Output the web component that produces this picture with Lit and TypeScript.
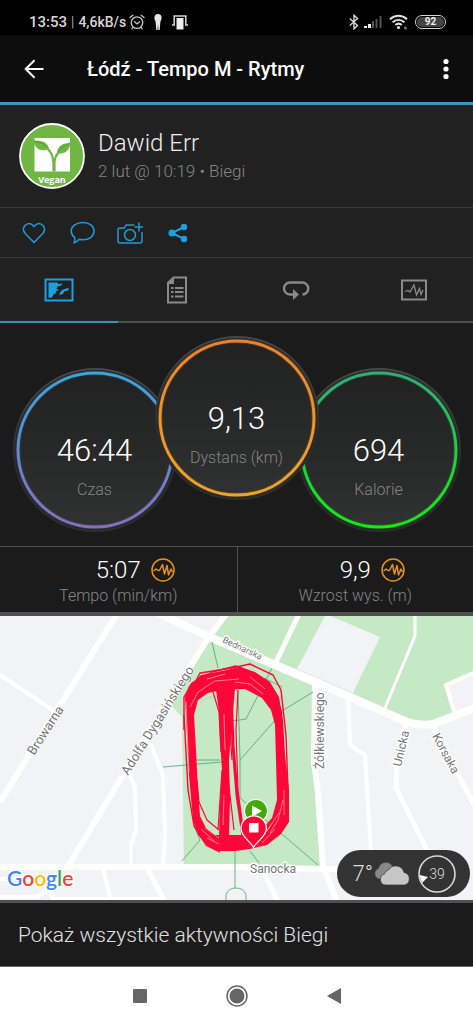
import { LitElement, html, svg, css } from "lit";
import { customElement, property, state } from "lit/decorators.js";

@customElement("status-bar")
class StatusBar extends LitElement {
  static styles = css`
    :host { display: flex; justify-content: space-between; align-items: center; height: 35px; padding: 8px 27px 0 29px; box-sizing: border-box; background: #000; color: #d6d6d6; font-size: 15px; font-weight: 500; line-height: 20px; }
    .side { display: flex; align-items: center; }
    .speed { font-size: 14px; }
    .bar { font-weight: 300; margin: 0 4px; }
    .alarm { margin: 0 9px 0 3px; }
    .person { margin-right: 10px; }
    .signal { margin: 0 7px 0 5px; }
    .wifi { margin-right: 6px; }
    .battery { box-sizing: border-box; width: 31px; height: 14px; border: 1px solid #d6d6d6; border-radius: 7px; background: #444 content-box; padding: 1px; font-size: 10px; font-weight: 700; line-height: 10px; text-align: center; color: #eee; }
    svg { display: block; }
  `;
  render() {
    return html`
      <div class="side">
        <span>13:53</span><span class="bar">|</span><span class="speed">4,6kB/s</span>
        <svg class="alarm" width="16" height="16" viewBox="0 0 16 16" fill="none" stroke="#c8c8c8" stroke-width="1.3" stroke-linecap="round">
          <circle cx="8" cy="8.6" r="5.8" /><path d="M1 3.6 3.8 1.2M15 3.6l-2.8-2.4M5.6 7.8 8 10l2.6-2.2M4 13.4l-1.2 1.4M12 13.4l1.2 1.4" />
        </svg>
        <svg class="person" width="8" height="16" viewBox="0 0 8 16" fill="#e6e6e6">
          <ellipse cx="4" cy="3.8" rx="3.6" ry="3.8" /><path d="M1.3 6h5.4l-.5 4-.5 6H4.4L4 10l-.4 6H2.3l-.5-6z" />
        </svg>
        <svg width="16" height="16" viewBox="0 0 16 16">
          <path d="M2.2 11V2h11.6v9M0 11h3M13 11h3" fill="none" stroke="#d6d6d6" stroke-width="1.500" /><path d="M4.500 4h7v11.500h-7z" fill="#eee" />
        </svg>
      </div>
      <div class="side">
        <svg width="10" height="16" viewBox="0 0 10 16" fill="none" stroke="#d6d6d6" stroke-width="1.400"><path d="m.8 4.400 7.700 7L5 14.800V1.200l3.500 3.400-7.700 7" /></svg>
        <svg class="signal" width="18" height="14" viewBox="0 0 18 14">
          <path d="M0 11h3v2H0zM4 9h3v4H4z" fill="#eee" /><path d="M8 6h2v7H8zM11.500 4h2v9h-2zM15.500 1h2v12h-2z" fill="#555" />
        </svg>
        <svg class="wifi" width="20" height="16" viewBox="0 0 20 16" fill="none" stroke="#e2e2e2" stroke-width="2">
          <path d="M1 5.200c5-4.600 12-4.600 17 0M3.600 8.200c3.500-3.100 8.300-3.100 11.800 0M6.300 11c2-1.700 4.500-1.700 6.500 0" /><circle cx="9.500" cy="13.500" r="1.600" fill="#e2e2e2" stroke="none" /><circle cx="16.500" cy="14" r="1.500" fill="#777" stroke="none" />
        </svg>
        <span class="battery">92</span>
      </div>`;
  }
}

@customElement("activity-gauge")
class ActivityGauge extends LitElement {
  @property() value = "";
  @property() label = "";
  @property() from = "";
  @property() to = "";
  static styles = css`
    :host { display: grid; width: 164px; flex: none; }
    svg, .text { grid-area: 1 / 1; }
    svg { display: block; }
    .text { display: flex; flex-direction: column; align-items: center; padding-top: 64px; }
    .value { font-size: 31px; line-height: 38px; font-weight: 300; color: #fff; }
    .label { font-size: 16px; line-height: 20px; margin-top: 10px; font-weight: 300; color: #858585; }
  `;
  render() {
    return html`
      <svg width="164" height="164" viewBox="0 0 164 164">
        <defs>
          <linearGradient id="ring" x2="0" y2="1"><stop stop-color=${this.from} /><stop offset="1" stop-color=${this.to} /></linearGradient>
          <linearGradient id="fill" x2="0" y2="1"><stop stop-color="#222222" /><stop offset=".5" stop-color="#272828" /><stop offset="1" stop-color="#303131" /></linearGradient>
          <linearGradient id="edge" x2="0" y2="1"><stop stop-color="#454748" /><stop offset=".6" stop-color="#2b2b2b" /><stop offset="1" stop-color="#2f2e2e" /></linearGradient>
        </defs>
        <circle cx="82" cy="82" r="81" fill="#202020" stroke="url(#edge)" stroke-width="2" />
        <circle cx="82" cy="82" r="77" fill="url(#fill)" stroke=${this.to} stroke-opacity=".15" stroke-width="5" />
        <circle cx="82" cy="82" r="77" fill="none" stroke="url(#ring)" stroke-width="3" />
      </svg>
      <div class="text"><span class="value">${this.value}</span><span class="label">${this.label}</span></div>`;
  }
}

@customElement("route-map")
class RouteMap extends LitElement {
  static styles = css`
    :host { display: block; position: relative; background: #f1f3f4; }
    .map { display: block; width: 100%; height: auto; }
    .street { fill: #767676; font-size: 12px; stroke: #fff; stroke-width: 3px; paint-order: stroke; stroke-linejoin: round; }
    .small { font-size: 9px; }
    .large { font-size: 13px; stroke-width: 1px; }
    .logo { font-family: Lato, sans-serif; font-size: 21px; font-weight: 600; stroke: #fff; stroke-width: 2px; paint-order: stroke; }
    .weather { position: absolute; right: 3px; bottom: 3px; display: flex; align-items: center; box-sizing: border-box; height: 47px; padding: 0 14px 0 15px; border-radius: 24px; background: #333; color: #ddd; font-weight: 300; font-size: 22px; line-height: 28px; }
    .cloud { margin: 0 7px 0 0; }
    .wind { display: grid; place-items: center; font-size: 14px; line-height: 18px; }
    .wind > * { grid-area: 1 / 1; }
  `;
  render() {
    const white = (d: string, w: number) => svg`<path d=${d} stroke="#fff" stroke-width=${w} fill="none" stroke-linejoin="round" />`;
    const lap = (d: string, w: number) => svg`<path d=${d} stroke="#ff0638" stroke-width=${w} fill="none" stroke-linejoin="round" />`;
    return html`
      <svg class="map" viewBox="0 616 473 284" role="img" aria-label="Mapa trasy">
        <path d="M0 616h473v284H0z" fill="#f1f3f4" />
        <path d="M229 616h244v96l-40 12h-20l-97-42-109-45z" fill="#c5e8c5" />
        <path d="M207 640l106 46v82l7 98H184l-2-149-10-11z" fill="#c5e8c5" />
        <path d="M326 614l54 23-27 56-56-24zM473 673l-27 12 9 30 18-6z" fill="#f1f3f4" />
        ${white("M117 614 55 713 0 802", 6)}
        ${white("M0 675l54 36", 4)}
        ${white("M226 614l-19 26-84 135-53 88-2 6", 6)}
        ${white("M152 610l55 26 109 46 91 40q12 4 26 2l42-16", 8)}
        ${white("M299 614l-23 48", 5)}
        ${white("M415 614v22l-30 72", 3)}
        ${white("M476 672l-30 13 9 30", 4)}
        ${white("M315 682l-1 80 4 30 5 74 14 36", 6)}
        ${white("M348 697l2 48 15 10 6 96", 4)}
        ${white("M406 724l-9 38-1 26 32 64", 5)}
        ${white("M433 724l17 36 25 46", 5)}
        ${white("M0 867h240l120 3", 6)}
        ${white("M150 743l5 12 8 20 2 60-2 29", 4)}
        ${white("M125 773h4l6 15 1 42-5 15v20", 4)}
        ${white("M103 868l8 34M0 879h18M0 897h37l12-8 6 14M54 899h110", 4)}
        ${white("M147 868l18 34M262 868l16 34", 5)}
        <path d="M212 642l6 26M238 690l2 70v38l78 67M272 668l-26 51-13 2M264 678l18 9M313 692l-28 17-45 51M163 767l59-5M182 861l18-21-6-14M235 850v38M226 902v-7q2-7 10-7t10 7v7M250 851l9 12M188 760h32" fill="none" stroke="#58ab7b" stroke-width=".9" />

        <path fill="#ff0638" fill-rule="evenodd" d="M185 697 189 686 201 675 222 671 240 667 255 672 270 682 279 697 283 720 285 755 289 790 289 822 281 834 267 845 250 849 235 851 218 851 208 846 198 835 193 820 189 775 187 735ZM194 715 198 700 208 693 222 690 245 689 262 698 271 710 275 725 276 760 277 800 272 818 262 829 250 835 215 835 206 828 200 816 198 790 196 750Z" />
        <path fill="#ff0638" d="M216 690 235 688 231 735 229 760 230 800 229 837H219L220 800 222 770 220 740 219 712Z" />
        ${lap("M231 690l2 55 4 50 6 41", 3)}
        ${lap("M238 690l-2 40 2 60 6 46", 1.2)}
        ${lap("M228 700l4 60M226 760l8 70", 1.2)}
        ${lap("M186 700 200 673 232 668 250 664 273 675 281 690 286 735 288 790", 1.4)}
        ${lap("M184 730V697l8-14 20-11 24-6 18 7 17 15 10 22 3 50 3 30v33", 1.4)}
        ${lap("M184 715 188 790 194 826 206 845 220 852", 1.4)}
        ${lap("M197 780l2 22 8 18 12 10", 1.2)}
        ${lap("M213 692l6 20 2 40M222 770l-4 60", 1.2)}
        <path d="M190 707l8-15 17-11 24-2M207 679l18-5M235 682l15 2 13 10M250 677l15 12M186 702l3 70M283 800l-5 20-8 13M279 813l-12 18M272 823l-11 16M275 829l-13 14M205 828l14 10M201 829l13 12M207 838l12 6M224 714l1 36M224 795l-1 30M197 706l6-6 10-4M284 790v25" stroke="#edb3a4" stroke-width=".7" fill="none" />

        <text class="street large" transform="translate(34 756) rotate(-57)">Browarna</text>
        <text class="street large" transform="translate(128 776) rotate(-58)">Adolfa Dygasińskiego</text>
        <text class="street small" transform="translate(222 642) rotate(25)">Bednarska</text>
        <text class="street" transform="translate(324 769) rotate(-90)">Żółkiewskiego</text>
        <text class="street" transform="translate(401 767) rotate(-77)">Unicka</text>
        <text class="street" transform="translate(432 736) rotate(62)">Korsaka</text>
        <text class="street" x="250" y="873">Sanocka</text>

        <circle cx="256" cy="811" r="11.500" fill="#43a809" stroke="#fff" stroke-width="1.200" />
        <path d="M252 805.500l10 5.500-10 6z" fill="#fff" />
        <path d="M253.500 847.500c-3-6-12.500-11-12.500-19a12.700 12.700 0 0 1 25.400 0c0 8-9.900 13-12.900 19z" fill="#ff0638" stroke="#fff" stroke-width="1.200" />
        <path d="M249 823h9.500v9.500H249z" fill="#fff" />
        <text class="logo" x="7" y="886"><tspan fill="#4285f4">G</tspan><tspan fill="#ea4335">o</tspan><tspan fill="#fbbc05">o</tspan><tspan fill="#4285f4">g</tspan><tspan fill="#34a853">l</tspan><tspan fill="#ea4335">e</tspan></text>
      </svg>
      <div class="weather">
        <span>7°</span>
        <svg class="cloud" width="38" height="24" viewBox="0 0 38 24">
          <path d="M6 17a5.500 5.500 0 0 1-.5-10.500A7.500 7.500 0 0 1 19 3.500a5.500 5.500 0 0 1 3 8L14 17z" fill="#888" stroke="#444" stroke-width=".6" />
          <path d="M13 23a5.600 5.600 0 0 1-1.500-11 5 5 0 0 1 4-4 8.500 8.500 0 0 1 15.500 2.500A6.400 6.400 0 0 1 31.500 23z" fill="#c6c6c6" stroke="#333" stroke-width=".7" />
        </svg>
        <div class="wind">
          <svg width="38" height="38" viewBox="0 0 38 38"><circle cx="19" cy="19" r="18" fill="none" stroke="#d8d8d8" stroke-width="1.600" /><path d="M1.500 20l8.500 2-6 6z" fill="#fff" /></svg>
          <span>39</span>
        </div>
      </div>`;
  }
}

const PULSE = "M2.500 13 5 11l2 1.500h1.500l3-6 2 9.500L16 7.500 17.500 17l2.500-6 1.500 3";

@customElement("app-root")
class AppRoot extends LitElement {
  @state() private tab = 0;

  static styles = css`
    :host { display: flex; flex-direction: column; min-height: 100vh; background: #fff; font-family: Roboto, "Liberation Sans", sans-serif; color: #fff; }
    button { appearance: none; border: 0; padding: 0; margin: 0; background: none; color: inherit; font: inherit; cursor: pointer; display: grid; place-items: center; }
    svg { display: block; }
    .appbar { display: flex; align-items: center; height: 67px; padding: 0 11px 0 14px; background: #0d0d0d; border-bottom: 3px solid #2c9bd0; }
    .back, .more { width: 40px; height: 40px; }
    .more { width: 32px; }
    h1 { flex: 1; margin: 0 0 0 33px; font-size: 20px; line-height: 28px; font-weight: 500; }
    .profile { display: flex; align-items: center; gap: 13px; height: 102px; padding: 0 19px; background: #212121; border-bottom: 1px solid #383838; }
    .name { font-size: 24px; line-height: 30px; font-weight: 300; color: #eee; }
    .meta { font-size: 17px; line-height: 26px; font-weight: 300; color: #858585; }
    .vegan { font: 700 9px "Open Sans", sans-serif; }
    .actions { display: flex; padding: 0 10px; background: #212121; border-bottom: 1px solid #383838; }
    .actions button { width: 48px; height: 49px; }
    .tabs { display: grid; grid-template-columns: repeat(4, 1fr); background: #212121; }
    .tabs button { height: 65px; box-sizing: border-box; border-bottom: 2px solid #4f4f4f; color: #8a8a8a; }
    .tabs button.active { color: #1ea0e0; border-color: #2e94c8; }
    .gauges { display: flex; justify-content: center; align-items: flex-end; padding: 13px 0 14px; background: #1b1b1b; }
    .side { margin: 0 -11px; }
    .main { margin: 0 -11px 32px; z-index: 1; }
    .stats { display: grid; grid-template-columns: 1fr 1fr; background: #1b1b1b; border-top: 1px solid #505050; border-bottom: 4px solid #505050; }
    .stat { padding: 9px 0 5px; display: flex; flex-direction: column; }
    .stat + .stat { border-left: 1px solid #505050; }
    .figure { display: grid; grid-template-columns: 1fr auto 1fr; gap: 10px; align-items: center; font-size: 24px; line-height: 28px; font-weight: 300; }
    .figure span { grid-column: 2; }
    .caption { text-align: center; font-size: 16px; line-height: 23px; font-weight: 300; color: #858585; }
    .all { display: block; padding: 16px 18px 15px; background: #1b1b1b; border-top: 3px solid #505050; border-bottom: 1px solid #666; color: #e0e0e0; font-size: 21px; line-height: 32px; font-weight: 300; text-decoration: none; }
    .nav { display: flex; justify-content: center; align-items: center; gap: 57px; flex: 1; min-height: 57px; color: #666; }
    .nav button { width: 40px; height: 40px; }
  `;

  private tabIcons = [
    svg`<svg width="30" height="24" viewBox="0 0 30 24"><path d="M1.500 1.500h27v21h-27z" fill="none" stroke="currentColor" stroke-width="2" /><path d="M4.500 4.500h8.500l1.500 1.500 4-.5-.5 1.500-4.500 1.500-1 2.500 2.500 1-3.500 1.500 1 1.500-2.500 1-1.500 2.500-1 1-3 .5zM15 17.500l1-3c2-3 5-4 9-4.500l-1 2.500-4 1-1 2.500-2.500.5z" fill="currentColor" /></svg>`,
    svg`<svg width="22" height="28" viewBox="0 0 22 28"><path d="M7.500 1.500h12.500v25H2V7z" fill="none" stroke="currentColor" stroke-width="2" /><path d="M1 8l7-7v7zM5 11h2.500v2H5zM9 11h8.500v2H9zM5 15h2.500v2H5zM9 15h8.500v2H9zM5 19.500h2.500v2H5zM9 19.500h8.500v2H9z" fill="currentColor" /></svg>`,
    svg`<svg width="28" height="22" viewBox="0 0 28 22"><path d="M12 15.500H8A6 6 0 0 1 8 3.500h12a6 6 0 0 1 .5 12" fill="none" stroke="currentColor" stroke-width="2.400" /><path d="M11 10l6 5.500-6 5.500z" fill="currentColor" /></svg>`,
    svg`<svg width="28" height="22" viewBox="0 0 28 22"><path d="M2 1.500h24v19H2z" fill="none" stroke="currentColor" stroke-width="2" /><path d="M5 12.500l3-1 2 1.500 4-7 2.500 10 3-6.500 1.500 6 2-4.500" fill="none" stroke="currentColor" stroke-width="1.300" /></svg>`,
  ];
  private tabNames = ["Mapa", "Szczegóły", "Okrążenia", "Wykresy"];

  private stat(value: string, caption: string) {
    return html`<div class="stat">
      <div class="figure"><span>${value}</span>
        <svg width="24" height="24" viewBox="0 0 24 24" fill="none" stroke="#e8921c" stroke-width="1.500" stroke-linejoin="round"><circle cx="12" cy="12" r="11" /><path d=${PULSE} /></svg>
      </div>
      <div class="caption">${caption}</div>
    </div>`;
  }

  render() {
    return html`
      <status-bar></status-bar>
      <header class="appbar">
        <button class="back" aria-label="Wstecz"><svg width="20" height="20" viewBox="0 0 20 20" fill="none" stroke="#fff" stroke-width="2"><path d="M19.500 10H2M10.500 1.200 1.700 10l8.800 8.800" /></svg></button>
        <h1>Łódź - Tempo M - Rytmy</h1>
        <button class="more" aria-label="Więcej"><svg width="6" height="22" viewBox="0 0 6 22" fill="#fff"><circle cx="3" cy="3.500" r="2.600" /><circle cx="3" cy="11" r="2.600" /><circle cx="3" cy="18.500" r="2.600" /></svg></button>
      </header>
      <section class="profile">
        <svg width="66" height="66" viewBox="0 0 66 66">
          <circle cx="33" cy="33" r="32" fill="#6fb643" stroke="#fff" stroke-width="1.800" />
          <path d="M15.500 15H51v33.500H15.500z" fill="#fff" />
          <path d="M34.500 48.500V40c-1-9-3-13-9-16M35.500 48.500V40c0-6 2-9 6-12" fill="none" stroke="#6fb643" stroke-width="2.200" />
          <path d="M14.500 18c8-1 14 1 15.500 7.500-7 4-14 1-15.500-7.500zM51.500 20c-8 0-13 3-13.500 10 7 2 12.500-2 13.500-10z" fill="#6fb643" />
          <path d="M15 18c6 1 10 3 13.500 6.500M51 20c-5 2-9 5-12 9" fill="none" stroke="#559b32" stroke-width="1" />
          <text class="vegan" x="33" y="60" fill="#fff" text-anchor="middle">Vegan</text>
        </svg>
        <div><div class="name">Dawid Err</div><div class="meta">2 lut @ 10:19 • Biegi</div></div>
      </section>
      <div class="actions">
        <button aria-label="Lubię to"><svg width="24" height="22" viewBox="0 0 24 22" fill="none" stroke="#2299d6" stroke-width="1.500" stroke-linejoin="round"><path d="M12 20.500 3.200 11.500C-1.500 6 5-1.500 10.500 3L12 4.600 13.500 3C19-1.500 25.500 6 20.800 11.500z" /></svg></button>
        <button aria-label="Komentarz"><svg width="25" height="24" viewBox="0 0 25 24" fill="none" stroke="#2299d6" stroke-width="1.500" stroke-linejoin="round"><path d="M13 1.500c6.500 0 11 3.600 11 8.600s-4.500 8.700-11 8.700c-1.400 0-2.500-.1-3.800-.5-1.400 1.800-3 3-5.200 3.600.9-1.600 1.200-3.200.7-5.200C2.500 15 1.200 12.800 1.200 10.100 1.200 5.100 6.500 1.500 13 1.500z" /></svg></button>
        <button aria-label="Dodaj zdjęcie"><svg width="26" height="24" viewBox="0 0 26 24" fill="none" stroke="#2299d6" stroke-width="1.500" stroke-linejoin="round"><path d="M17.500 4H9L7.500 7H3Q1 7 1 9v11q0 2 2 2h20q2 0 2-2V11M22 1.500v9M17.500 6h9" /><circle cx="13" cy="14" r="5.500" /></svg></button>
        <button aria-label="Udostępnij"><svg width="20" height="20" viewBox="0 0 20 20" fill="#1ea0e0"><path d="M16 4 4 10l12 6" fill="none" stroke="#1ea0e0" stroke-width="2" /><circle cx="16" cy="4" r="3.200" /><circle cx="4" cy="10" r="3.600" /><circle cx="16" cy="16" r="3.200" /></svg></button>
      </div>
      <div class="tabs" role="tablist">
        ${this.tabIcons.map((icon, i) => html`<button role="tab" aria-label=${this.tabNames[i]} aria-selected=${this.tab === i} class=${this.tab === i ? "active" : ""} @click=${() => (this.tab = i)}>${icon}</button>`)}
      </div>
      <section class="gauges">
        <activity-gauge class="side" value="46:44" label="Czas" from="#35a8dc" to="#8470bd"></activity-gauge>
        <activity-gauge class="main" value="9,13" label="Dystans (km)" from="#ee8130" to="#f0a52a"></activity-gauge>
        <activity-gauge class="side" value="694" label="Kalorie" from="#35a982" to="#12ee12"></activity-gauge>
      </section>
      <section class="stats">${this.stat("5:07", "Tempo (min/km)")}${this.stat("9,9", "Wzrost wys. (m)")}</section>
      <route-map></route-map>
      <a class="all" href="#biegi">Pokaż wszystkie aktywności Biegi</a>
      <nav class="nav">
        <button aria-label="Ostatnie"><svg width="16" height="16" viewBox="0 0 16 16"><rect x="1" y="1" width="14" height="14" rx="1" fill="currentColor" /></svg></button>
        <button aria-label="Ekran główny"><svg width="22" height="22" viewBox="0 0 22 22"><circle cx="11" cy="11" r="10" fill="none" stroke="currentColor" stroke-width="1.500" /><circle cx="11" cy="11" r="7.500" fill="currentColor" /></svg></button>
        <button aria-label="Cofnij"><svg width="16" height="18" viewBox="0 0 16 18"><path d="M15 1v16L1 9z" fill="currentColor" /></svg></button>
      </nav>`;
  }
}
